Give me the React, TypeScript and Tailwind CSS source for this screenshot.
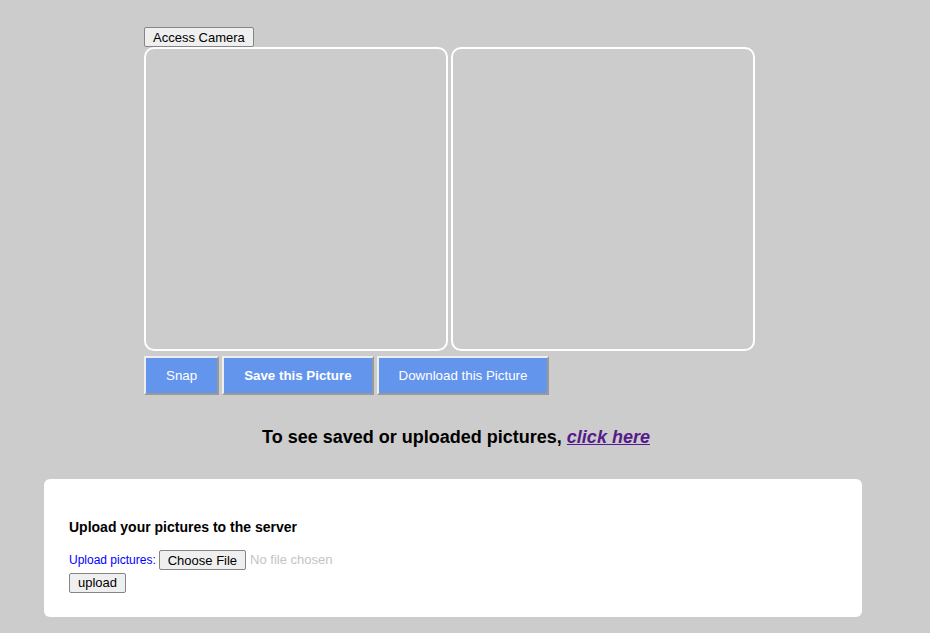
import React from 'react'

const actions = [
  { id: 'snap', label: 'Snap', bold: false },
  { id: 'save', label: 'Save this Picture', bold: true },
  { id: 'download', label: 'Download this Picture', bold: false },
]

const nativeBtn =
  'bg-[#efefef] border border-[#858585] rounded-[2px] text-[13px] leading-[15px] text-black'

export default function App() {
  return (
    <div
      className="min-h-[633px] w-[930px] bg-[#cccccc] pt-[27px]"
      style={{ fontFamily: '"Liberation Sans", Arial, sans-serif' }}
    >
      {/* camera area */}
      <div className="ml-[144px] flex flex-col items-start">
        <button className={`${nativeBtn} h-[20px] px-[8px]`}>Access Camera</button>
        <div className="flex gap-[3px]">
          <div className="h-[304px] w-[304px] rounded-[10px] border-2 border-white" />
          <div className="h-[304px] w-[304px] rounded-[10px] border-2 border-white" />
        </div>
        <div className="mt-[5px] flex gap-[3px]">
          {actions.map(({ id, label, bold }) => (
            <button
              key={id}
              className={`h-[39px] border-2 border-t-[#eeeeee] border-l-[#eeeeee] border-r-[#999999] border-b-[#999999] bg-[#6495ed] px-[20px] text-[13.33px] text-white ${
                bold ? 'font-bold' : 'font-normal'
              }`}
            >
              {label}
            </button>
          ))}
        </div>
      </div>

      <h3 className="mt-[31px] pr-[18px] text-center text-[18px] font-bold leading-[22px] text-black">
        To see saved or uploaded pictures,{' '}
        <a href="#" className="italic text-[#551a8b] underline">
          click here
        </a>
      </h3>

      {/* upload card */}
      <div className="ml-[44px] mt-[31px] h-[138px] w-[818px] rounded-[6px] bg-white px-[25px] pt-[40px]">
        <h4 className="text-[14px] font-bold leading-[16px] text-black">
          Upload your pictures to the server
        </h4>
        <div className="mt-[15px] flex items-center">
          <span className="text-[12px] text-[#0000ff]">Upload pictures:</span>
          <button className={`${nativeBtn} ml-[3px] h-[20px] px-[8px]`}>Choose File</button>
          <span className="ml-[4px] text-[13px] text-[#c4c4c4]">No file chosen</span>
        </div>
        <button className={`${nativeBtn} mt-[1px] h-[20px] px-[8px]`}>upload</button>
      </div>
    </div>
  )
}
